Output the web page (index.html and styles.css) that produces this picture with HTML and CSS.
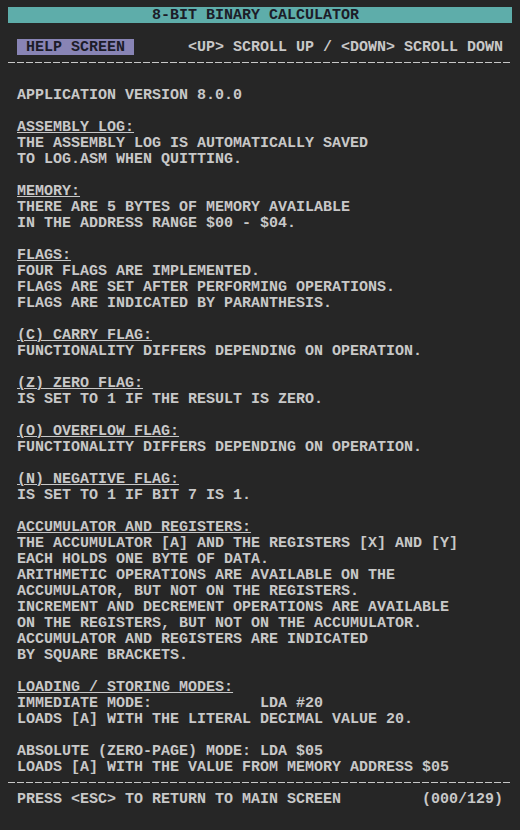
FILE: index.html
```html
<!DOCTYPE html>
<html>
<head>
<meta charset="utf-8">
<link rel="stylesheet" href="styles.css">
<title>8-BIT BINARY CALCULATOR</title>
</head>
<body>
<div class="screen">
<div class="line title">8-BIT BINARY CALCULATOR</div>
<div class="line"></div>
<div class="line"> <span class="tag"> HELP SCREEN </span>      &lt;UP&gt; SCROLL UP / &lt;DOWN&gt; SCROLL DOWN</div>
<div class="rule"></div>
<div class="line"></div>
<div class="line"> APPLICATION VERSION 8.0.0</div>
<div class="line"></div>
<div class="line"> <span class="head">ASSEMBLY LOG:</span></div>
<div class="line"> THE ASSEMBLY LOG IS AUTOMATICALLY SAVED</div>
<div class="line"> TO LOG.ASM WHEN QUITTING.</div>
<div class="line"></div>
<div class="line"> <span class="head">MEMORY:</span></div>
<div class="line"> THERE ARE 5 BYTES OF MEMORY AVAILABLE</div>
<div class="line"> IN THE ADDRESS RANGE $00 - $04.</div>
<div class="line"></div>
<div class="line"> <span class="head">FLAGS:</span></div>
<div class="line"> FOUR FLAGS ARE IMPLEMENTED.</div>
<div class="line"> FLAGS ARE SET AFTER PERFORMING OPERATIONS.</div>
<div class="line"> FLAGS ARE INDICATED BY PARANTHESIS.</div>
<div class="line"></div>
<div class="line"> <span class="head">(C) CARRY FLAG:</span></div>
<div class="line"> FUNCTIONALITY DIFFERS DEPENDING ON OPERATION.</div>
<div class="line"></div>
<div class="line"> <span class="head">(Z) ZERO FLAG:</span></div>
<div class="line"> IS SET TO 1 IF THE RESULT IS ZERO.</div>
<div class="line"></div>
<div class="line"> <span class="head">(O) OVERFLOW FLAG:</span></div>
<div class="line"> FUNCTIONALITY DIFFERS DEPENDING ON OPERATION.</div>
<div class="line"></div>
<div class="line"> <span class="head">(N) NEGATIVE FLAG:</span></div>
<div class="line"> IS SET TO 1 IF BIT 7 IS 1.</div>
<div class="line"></div>
<div class="line"> <span class="head">ACCUMULATOR AND REGISTERS:</span></div>
<div class="line"> THE ACCUMULATOR [A] AND THE REGISTERS [X] AND [Y]</div>
<div class="line"> EACH HOLDS ONE BYTE OF DATA.</div>
<div class="line"> ARITHMETIC OPERATIONS ARE AVAILABLE ON THE</div>
<div class="line"> ACCUMULATOR, BUT NOT ON THE REGISTERS.</div>
<div class="line"> INCREMENT AND DECREMENT OPERATIONS ARE AVAILABLE</div>
<div class="line"> ON THE REGISTERS, BUT NOT ON THE ACCUMULATOR.</div>
<div class="line"> ACCUMULATOR AND REGISTERS ARE INDICATED</div>
<div class="line"> BY SQUARE BRACKETS.</div>
<div class="line"></div>
<div class="line"> <span class="head">LOADING / STORING MODES:</span></div>
<div class="line"> IMMEDIATE MODE:            LDA #20</div>
<div class="line"> LOADS [A] WITH THE LITERAL DECIMAL VALUE 20.</div>
<div class="line"></div>
<div class="line"> ABSOLUTE (ZERO-PAGE) MODE: LDA $05</div>
<div class="line"> LOADS [A] WITH THE VALUE FROM MEMORY ADDRESS $05</div>
<div class="rule"></div>
<div class="line"> PRESS &lt;ESC&gt; TO RETURN TO MAIN SCREEN         (000/129)</div>
</div>
</body>
</html>
```

FILE: styles.css
```css
html, body {
  margin: 0;
  padding: 0;
  background: #262626;
  height: 100%;
}

.screen {
  width: 504px;
  padding: 7px 8px 0 8px;
  font-family: "Liberation Mono", "DejaVu Sans Mono", monospace;
  font-size: 15px;
  font-weight: bold;
  color: #c8c8c8;
}

.line {
  height: 16px;
  line-height: 18px;
  white-space: pre;
}

.title {
  background: #5eadaa;
  color: #1c1c28;
  padding-left: 144px;
}

.tag {
  background: #8884b5;
  color: #1c1c28;
  display: inline-block;
  height: 16px;
  vertical-align: top;
}

.head {
  text-decoration: underline;
  text-decoration-thickness: 1px;
  text-underline-offset: 1px;
}

.rule {
  height: 16px;
  background-image: repeating-linear-gradient(to right, #c8c8c8 0, #c8c8c8 7px, transparent 7px, transparent 9px);
  background-size: 100% 1px;
  background-position: 0 7px;
  background-repeat: no-repeat;
}
```
